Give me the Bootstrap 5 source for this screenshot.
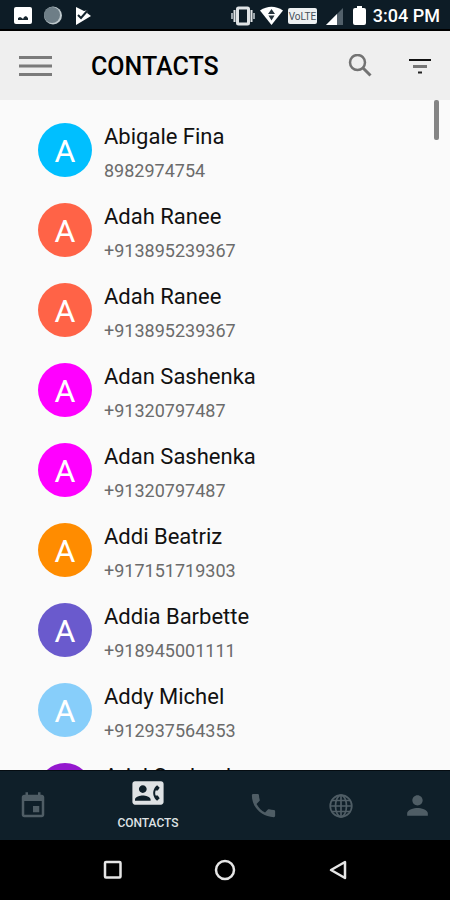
<!DOCTYPE html>
<html lang="en">
<head>
<meta charset="utf-8">
<meta name="viewport" content="width=device-width, initial-scale=1">
<title>Contacts</title>
<link href="https://cdn.jsdelivr.net/npm/bootstrap@5.3.0/dist/css/bootstrap.min.css" rel="stylesheet">
<style>
body { font-family: Roboto, sans-serif; background: #fafafa; color: #111; }
svg { display: block; flex: none; }
button { border: 0; background: none; padding: 0; color: inherit; }
.status-bar { height: 31px; padding: 2px 10px 0 14px; background: #0d1c26; border-bottom: 2px solid #000; color: #fff; }
.status-bar time { font-size: 18px; line-height: 28px; font-weight: 500; margin-left: 7px; }
.app-bar { height: 69px; padding: 0 18px; background: #efefef; }
.app-bar h1 { font-size: 25px; line-height: 32px; font-weight: 500; margin-left: 38px; padding-top: 2px; }
.tools { gap: 36px; }
.people { padding: 10px 38px 0; min-height: 0; }
.person { height: 80px; gap: 12px; color: inherit; }
.avatar { width: 54px; height: 54px; font-size: 32px; line-height: 56px; }
.person-text { height: 80px; padding-top: 11px; }
.person-name { font-size: 22px; line-height: 32px; }
.person-phone { font-size: 18px; line-height: 36px; color: #6b6b6b; }
.c-sky { background: #00bfff; }
.c-tomato { background: #ff6347; }
.c-magenta { background: #ff00ff; }
.c-orange { background: #ff8c00; }
.c-slate { background: #6a5acd; }
.c-light { background: #87cefa; }
.c-violet { background: #9418ce; }
.thumb { top: 0; right: 11px; width: 5px; height: 40px; border-radius: 2px; background: #858585; }
.tabs-bar { height: 70px; background: #0f1f29; border-top: 1px solid #050c11; color: #4f5d65; }
.tabs-row { margin: 0 -6px; }
.tab-item { flex: 1 1 0; }
.tab-current { flex-grow: 2; color: #dfe2e4; }
.tab-current span { font-size: 12px; line-height: 18px; margin-top: 8px; font-weight: 500; }
.system-bar { height: 60px; background: #000; color: #e6e6e6; }
</style>
</head>
<body>
<div class="d-flex flex-column vh-100 overflow-hidden">
  <div class="status-bar d-flex align-items-center justify-content-between flex-shrink-0">
    <div class="d-flex align-items-center">
      <svg width="18" height="18" viewBox="0 0 18 18"><rect width="18" height="17" y="0" rx="2" fill="#fff"/><path d="M4 13v-2l2-1 2 1 1 1 1-2 2-1 2 2v2z" fill="#17262f"/></svg>
      <svg class="ms-2 me-2" width="26" height="20" viewBox="0 0 26 20"><circle cx="13" cy="9.500" r="9" fill="#bfc9cd"/><circle cx="12" cy="9" r="8" fill="#6e7e87"/></svg>
      <svg width="18" height="18" viewBox="0 0 18 18"><path d="M2 0l8 4 4-1-1 3 4 3-15 9z" fill="#fff"/><path d="M4 8l3 3 7-8" fill="none" stroke="#17262f" stroke-width="2"/></svg>
    </div>
    <div class="d-flex align-items-center">
      <svg width="24" height="20" viewBox="0 0 24 20"><rect x="6.500" y="2" width="11" height="16" rx="1" fill="#0d1c26" stroke="#dfe3e5" stroke-width="3"/><path d="M3.500 4v12M20.500 4v12" stroke="#dfe3e5" stroke-width="2"/><path d="M1 7v6M23 7v6" stroke="#9aa4aa" stroke-width="2"/></svg>
      <svg class="ms-1" width="25" height="20" viewBox="0 0 25 20"><path d="M1 4.500Q12.500-3 24 4.500L12.500 19z" fill="#fff"/><path d="M12.500 3l3.500 5H9zM9.500 9.500h6l-3 5z" fill="#25333c"/></svg>
      <svg class="ms-1" width="29" height="17" viewBox="0 0 29 17"><rect width="29" height="16" y="1" rx="2" fill="#edf0f1"/><text x="14.500" y="13" text-anchor="middle" font-family="Roboto, sans-serif" font-size="10" fill="#46515a">VoLTE</text></svg>
      <svg class="ms-2" width="20" height="18" viewBox="0 0 20 18"><path d="M1 18L18 1v17z" fill="#52606a"/><path d="M1 18L12 7v11z" fill="#fff"/></svg>
      <svg class="ms-2" width="13" height="20" viewBox="0 0 13 20"><path d="M4 0h5v2h2q2 0 2 2v13q0 2-2 2H2q-2 0-2-2V4q0-2 2-2h2z" fill="#fff"/></svg>
      <time datetime="15:04">3:04 PM</time>
    </div>
  </div>

  <header class="app-bar d-flex align-items-center flex-shrink-0">
    <button type="button" aria-label="Menu"><svg width="35" height="24" viewBox="0 0 35 24"><path d="M1 3.500h33M1 12h33M1 20.500h33" stroke="#7b7b7b" stroke-width="3"/></svg></button>
    <h1 class="mb-0 me-auto text-black">CONTACTS</h1>
    <div class="tools d-flex align-items-center">
      <button type="button" aria-label="Search"><svg width="24" height="24" viewBox="0 0 24 24" fill="none" stroke="#737373"><circle cx="9.500" cy="8.500" r="7.500" stroke-width="2.500"/><path d="M15 14l7.500 7.500" stroke-width="3"/></svg></button>
      <button type="button" aria-label="Filter"><svg width="24" height="24" viewBox="0 0 24 24"><path d="M1 6h22" stroke="#111" stroke-width="2"/><path d="M5 12.500h14" stroke="#777" stroke-width="3"/><path d="M10 18.500h4" stroke="#222" stroke-width="2"/></svg></button>
    </div>
  </header>

  <main class="position-relative flex-fill overflow-hidden people">
    <ul class="list-unstyled mb-0">
      <li><a href="#" class="person d-flex align-items-center text-decoration-none"><span class="avatar c-sky rounded-circle text-white text-center flex-shrink-0">A</span><span class="person-text d-flex flex-column"><span class="person-name">Abigale Fina</span><span class="person-phone">8982974754</span></span></a></li>
      <li><a href="#" class="person d-flex align-items-center text-decoration-none"><span class="avatar c-tomato rounded-circle text-white text-center flex-shrink-0">A</span><span class="person-text d-flex flex-column"><span class="person-name">Adah Ranee</span><span class="person-phone">+913895239367</span></span></a></li>
      <li><a href="#" class="person d-flex align-items-center text-decoration-none"><span class="avatar c-tomato rounded-circle text-white text-center flex-shrink-0">A</span><span class="person-text d-flex flex-column"><span class="person-name">Adah Ranee</span><span class="person-phone">+913895239367</span></span></a></li>
      <li><a href="#" class="person d-flex align-items-center text-decoration-none"><span class="avatar c-magenta rounded-circle text-white text-center flex-shrink-0">A</span><span class="person-text d-flex flex-column"><span class="person-name">Adan Sashenka</span><span class="person-phone">+91320797487</span></span></a></li>
      <li><a href="#" class="person d-flex align-items-center text-decoration-none"><span class="avatar c-magenta rounded-circle text-white text-center flex-shrink-0">A</span><span class="person-text d-flex flex-column"><span class="person-name">Adan Sashenka</span><span class="person-phone">+91320797487</span></span></a></li>
      <li><a href="#" class="person d-flex align-items-center text-decoration-none"><span class="avatar c-orange rounded-circle text-white text-center flex-shrink-0">A</span><span class="person-text d-flex flex-column"><span class="person-name">Addi Beatriz</span><span class="person-phone">+917151719303</span></span></a></li>
      <li><a href="#" class="person d-flex align-items-center text-decoration-none"><span class="avatar c-slate rounded-circle text-white text-center flex-shrink-0">A</span><span class="person-text d-flex flex-column"><span class="person-name">Addia Barbette</span><span class="person-phone">+918945001111</span></span></a></li>
      <li><a href="#" class="person d-flex align-items-center text-decoration-none"><span class="avatar c-light rounded-circle text-white text-center flex-shrink-0">A</span><span class="person-text d-flex flex-column"><span class="person-name">Addy Michel</span><span class="person-phone">+912937564353</span></span></a></li>
      <li><a href="#" class="person d-flex align-items-center text-decoration-none" aria-label="Ariel Sashenka"><span class="avatar c-violet rounded-circle flex-shrink-0"></span><span class="person-text d-flex flex-column"><span class="person-name">Ariel Sashenka</span></span></a></li>
    </ul>
    <div class="thumb position-absolute"></div>
  </main>

  <nav class="tabs-bar flex-shrink-0 overflow-hidden" aria-label="Sections">
    <div class="tabs-row d-flex h-100">
      <button type="button" class="tab-item d-flex align-items-center justify-content-center" aria-label="Calendar"><svg width="30" height="30" viewBox="0 0 24 24" fill="currentColor"><path d="M17 12h-5v5h5v-5zM16 1v2H8V1H6v2H5c-1.110 0-1.990.9-1.990 2L3 19c0 1.100.89 2 2 2h14c1.100 0 2-.9 2-2V5c0-1.100-.9-2-2-2h-1V1h-2zm3 18H5V8h14v11z"/></svg></button>
      <button type="button" class="tab-item tab-current d-flex flex-column align-items-center justify-content-center" aria-current="page"><svg width="32" height="26" viewBox="0 2 24 20" fill="currentColor"><path d="M22 3H2C.9 3 0 3.900 0 5v14c0 1.100.9 2 2 2h20c1.100 0 1.990-.9 1.990-2L24 5c0-1.100-.9-2-2-2zM8 6c1.660 0 3 1.340 3 3s-1.340 3-3 3-3-1.340-3-3 1.340-3 3-3zm6 12H2v-1c0-2 4-3.100 6-3.100s6 1.100 6 3.100v1zm3.850-4h1.640L21 16l-1.990 1.990c-1.310-.98-2.280-2.380-2.730-3.990-.18-.64-.28-1.310-.28-2s.1-1.360.28-2c.45-1.620 1.420-3.010 2.730-3.990L21 8l-1.510 2h-1.640c-.22.630-.35 1.300-.35 2s.130 1.370.35 2z"/></svg><span>CONTACTS</span></button>
      <button type="button" class="tab-item d-flex align-items-center justify-content-center" aria-label="Calls"><svg width="31" height="31" viewBox="0 0 24 24" fill="currentColor"><path d="M6.620 10.790c1.440 2.830 3.760 5.140 6.590 6.590l2.200-2.200c.27-.27.67-.36 1.020-.24 1.120.37 2.330.57 3.570.57.55 0 1 .45 1 1V20c0 .55-.45 1-1 1-9.390 0-17-7.610-17-17 0-.55.45-1 1-1h3.500c.55 0 1 .45 1 1 0 1.250.2 2.450.57 3.570.11.35.03.74-.25 1.020l-2.200 2.200z"/></svg></button>
      <button type="button" class="tab-item d-flex align-items-center justify-content-center" aria-label="Web"><svg width="24" height="24" viewBox="0 0 24 24" fill="none" stroke="currentColor" stroke-width="1.700"><circle cx="12" cy="12" r="10.800"/><ellipse cx="12" cy="12" rx="5.500" ry="10.800"/><path d="M12 1v22M1 12h22M3 6.500h18M3 17.500h18"/></svg></button>
      <button type="button" class="tab-item d-flex align-items-center justify-content-center" aria-label="Profile"><svg width="31" height="31" viewBox="0 0 24 24" fill="currentColor"><path d="M12 12c2.210 0 4-1.790 4-4s-1.790-4-4-4-4 1.790-4 4 1.790 4 4 4zm0 2c-2.670 0-8 1.340-8 4v2h16v-2c0-2.660-5.330-4-8-4z"/></svg></button>
    </div>
  </nav>

  <div class="system-bar d-flex justify-content-center flex-shrink-0">
    <button type="button" class="col-3 d-flex align-items-center justify-content-center" aria-label="Recent apps"><svg width="20" height="20" viewBox="0 0 20 20" fill="none" stroke="currentColor" stroke-width="2.500"><rect x="2" y="2" width="15.500" height="15.500" rx="1"/></svg></button>
    <button type="button" class="col-3 d-flex align-items-center justify-content-center" aria-label="Home"><svg width="22" height="22" viewBox="0 0 22 22" fill="none" stroke="currentColor" stroke-width="2.500"><circle cx="11" cy="11" r="9"/></svg></button>
    <button type="button" class="col-3 d-flex align-items-center justify-content-center" aria-label="Back"><svg width="20" height="20" viewBox="0 0 20 20" fill="none" stroke="currentColor" stroke-width="2.500" stroke-linejoin="round"><path d="M17 2v16L3 10z"/></svg></button>
  </div>
</div>
<script src="https://cdn.jsdelivr.net/npm/bootstrap@5.3.0/dist/js/bootstrap.bundle.min.js"></script>
</body>
</html>
